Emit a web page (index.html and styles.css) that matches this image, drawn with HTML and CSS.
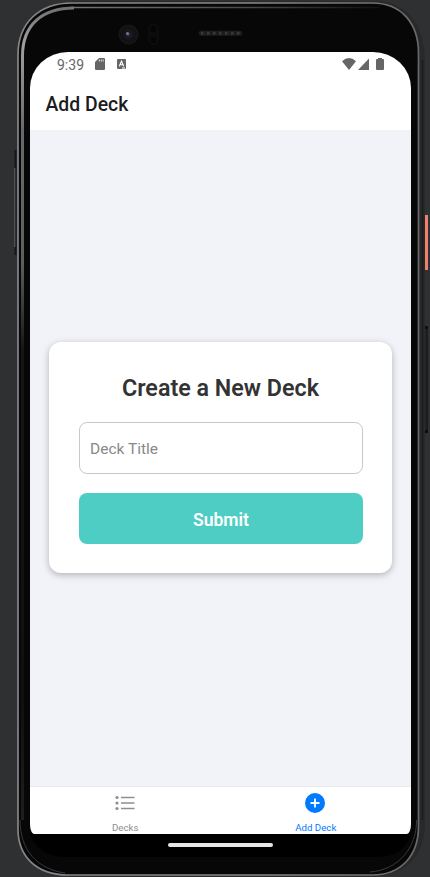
FILE: index.html
```html
<!DOCTYPE html>
<html lang="en">
<head>
<meta charset="utf-8">
<title>Add Deck</title>
<link rel="stylesheet" href="styles.css">
</head>
<body>
<div class="device">
  <svg class="frame" width="430" height="877" viewBox="0 0 430 877" fill="none" aria-hidden="true">
    <defs>
      <linearGradient id="rim" x1="0" y1="0" x2="0" y2="877" gradientUnits="userSpaceOnUse">
        <stop offset="0" stop-color="#666"/><stop offset=".05" stop-color="#a0a2a1"/><stop offset=".15" stop-color="#686a69"/><stop offset=".3" stop-color="#5c5f5e"/><stop offset=".4" stop-color="#151516"/><stop offset=".8" stop-color="#101011"/><stop offset="1" stop-color="#252526"/>
      </linearGradient>
      <linearGradient id="edge" x1="0" y1="0" x2="430" y2="0" gradientUnits="userSpaceOnUse">
        <stop offset="0" stop-color="#858589"/><stop offset=".6" stop-color="#88888a"/><stop offset="1" stop-color="#666"/>
      </linearGradient>
      <linearGradient id="top" x1="60" y1="0" x2="380" y2="0" gradientUnits="userSpaceOnUse">
        <stop offset="0" stop-color="#777"/><stop offset=".6" stop-color="#48484a"/><stop offset="1" stop-color="#101011"/>
      </linearGradient>
      <radialGradient id="lens"><stop offset="0" stop-color="#323452"/><stop offset=".3" stop-color="#171820"/><stop offset=".7" stop-color="#111113"/><stop offset="1" stop-color="#171718"/></radialGradient>
    </defs>
    <path d="M376 1C409 2 425 27 425 62V825C424 857 405 876 371 877H70L72 1Z" fill="#29292a"/>
    <path d="M422.500 60V820" stroke="#1b1c1d" stroke-width="1.500"/>
    <path d="M15.500 150V255" stroke="#151617" stroke-width="2"/>
    <path d="M14.800 168V247" stroke="#676969"/>
    <path d="M72 3H372C402 3 418.500 24 418.500 53V826C418.500 856 401 875 372 875H68C36 875 18 856 18 829V55C18 23 39 3 72 3Z" fill="#070708" stroke="url(#edge)" stroke-width="1.700"/>
    <path d="M22.500 820V56C22.500 25 42 8 74 8" stroke="url(#rim)" stroke-width="3"/>
    <path d="M70 7.500H380" stroke="url(#top)" stroke-width="1.500"/>
    <path d="M20 820C20 850 37 869 65 873M416.500 820C417 848 398 870 370 872" stroke="#39393a"/>
    <path d="M30 834H411C408 847 395 857 378 857H65C47 857 34 847 30 834Z" fill="#000"/>
    <rect x="425" y="215" width="3" height="55" fill="#ef806b"/>
    <rect x="425.500" y="326" width="2.500" height="107" fill="#1b1c1d"/>
    <path d="M426.500 326V329M426.500 430V433" stroke="#0b0b0b" stroke-width="2.500"/>
    <circle cx="128.500" cy="34.500" r="10" fill="url(#lens)"/>
    <circle cx="127.500" cy="33.500" r="1.500" fill="#737894"/>
    <rect x="149" y="24" width="9" height="20" rx="4.500" fill="#0b0b0c" stroke="#111112"/>
    <circle cx="153.500" cy="29" r="3" fill="#050506"/><circle cx="153.500" cy="40" r="3" fill="#050506"/>
    <path d="M201 33.200H240" stroke="#1c1c1c" stroke-width="5" stroke-linecap="round"/>
    <path d="M201 33.200H241" stroke="#383838" stroke-width="3" stroke-dasharray="2.500 3.500"/>
  </svg>

  <main class="screen">
    <div class="status">
      <span class="time">9:39</span>
      <svg class="sd" width="10" height="12" viewBox="0 0 10 12"><path d="M4 0H9Q10 0 10 1V11Q10 12 9 12H1Q0 12 0 11V4Z" fill="#666"/><path d="M4.400 1.500V3.500M6.300 1.500V3.500M8.200 1.500V3.500" stroke="#fff" stroke-width=".8"/></svg>
      <svg class="lang" width="9" height="10" viewBox="0 0 9 10"><rect width="9" height="10" rx="1" fill="#666"/><path d="M2.300 7.300L4.500 2.200L6.700 7.300M3.100 5.700H5.900M5 9H8" fill="none" stroke="#fff" stroke-width="1.100"/></svg>
      <span class="spacer"></span>
      <svg class="wifi" width="14" height="12" viewBox="0 0 14 12" fill="#666"><path d="M0 3.200Q7 -3 14 3.200L7 12Z"/></svg>
      <svg class="signal" width="11" height="12" viewBox="0 0 11 12" fill="#666"><path d="M11 .5V12H0Z"/></svg>
      <svg class="battery" width="8" height="12" viewBox="0 0 8 12" fill="#666"><path d="M2 0H6V1H7Q8 1 8 2V11Q8 12 7 12H1Q0 12 0 11V2Q0 1 1 1H2Z"/></svg>
    </div>
    <header class="header"><h1>Add Deck</h1></header>
    <section class="content">
      <form class="card">
        <h2>Create a New Deck</h2>
        <input class="field" type="text" placeholder="Deck Title" aria-label="Deck Title">
        <button class="submit" type="button">Submit</button>
      </form>
    </section>
    <nav class="tabs">
      <a class="tab">
        <svg width="20" height="20" viewBox="0 0 20 20"><path d="M6 4.500H19.500M6 10H19.500M6 15.500H19.500" stroke="#8e8e8f" stroke-width="1.500"/><g fill="#8e8e8f"><circle cx="2" cy="4.500" r="1.600"/><circle cx="2" cy="10" r="1.600"/><circle cx="2" cy="15.500" r="1.600"/></g></svg>
        <span>Decks</span>
      </a>
      <a class="tab active">
        <svg width="20" height="20" viewBox="0 0 20 20"><circle cx="10" cy="10" r="10" fill="#007aff"/><path d="M5.500 10H14.500M10 5.500V14.500" stroke="#fff" stroke-width="1.800"/></svg>
        <span>Add Deck</span>
      </a>
    </nav>
  </main>
  <div class="home"></div>
</div>
</body>
</html>
```
FILE: styles.css
```css
* { box-sizing: border-box; }

body {
  margin: 0;
  overflow: hidden;
  background: #2f3032;
  font-family: Roboto, "Liberation Sans", sans-serif;
}

.device {
  position: relative;
  width: 430px;
  height: 877px;
  padding: 52px 19px 0 30px;
}

.frame {
  position: absolute;
  inset: 0;
}

.screen {
  position: relative;
  display: flex;
  flex-direction: column;
  height: 782px;
  overflow: hidden;
  border-radius: 38px 38px 4px 4px / 36px 36px 10px 10px;
  background: #fff;
}

.status {
  display: flex;
  align-items: flex-start;
  height: 25px;
  padding: 6px 27px 0;
  color: #666;
}

.time { width: 38px; font-size: 14px; line-height: 14px; }
.lang { margin: 1px 0 0 12px; }
.spacer { flex: 1; }
.signal { margin-left: 2px; }
.battery { margin-left: 7px; }

.header {
  display: flex;
  align-items: center;
  height: 53px;
  padding: 1px 0 0 15.5px;
}

h1 {
  margin: 0;
  color: #1c1c1e;
  font-size: 19.4px;
  font-weight: 500;
}

.content {
  flex: 1;
  padding: 212px 19px 0;
  background: #f2f3f8;
}

.card {
  height: 231px;
  padding: 30px 29px 0;
  border-radius: 12px;
  background: #fff;
  box-shadow: 0 2px 7px rgba(0, 0, 0, .27);
}

h2 {
  margin: 0 0 17px;
  color: #333;
  font-size: 23.3px;
  font-weight: 600;
  line-height: 33px;
  text-align: center;
  white-space: nowrap;
}

.field,
.submit {
  display: block;
  width: 284px;
  margin-left: 1px;
  border-radius: 8px;
  font-family: inherit;
}

.field {
  height: 52px;
  padding: 2px 10px 0;
  border: 1px solid #c8c8c8;
  background: #fff;
  font-size: 15.5px;
}

.field::placeholder { color: #888; }

.submit {
  height: 51px;
  margin-top: 19px;
  padding: 2px 0 0;
  border: 0;
  background: #4ecdc4;
  color: #fff;
  font-size: 17.5px;
  font-weight: 600;
}

.tabs {
  display: flex;
  height: 48px;
  border-top: 1px solid #ebebed;
}

.tab {
  flex: 1;
  display: flex;
  flex-direction: column;
  align-items: center;
  padding-top: 6px;
  color: #8e8e8f;
  font-size: 9.7px;
  line-height: 12px;
}

.tab span { margin-top: 9px; }
.tab.active { color: #007aff; }
.tab.active svg { margin-right: 1px; }

.home {
  position: relative;
  width: 105px;
  height: 4px;
  margin: 9px 0 0 138px;
  border-radius: 2px;
  background: #e6e6e6;
}
```
